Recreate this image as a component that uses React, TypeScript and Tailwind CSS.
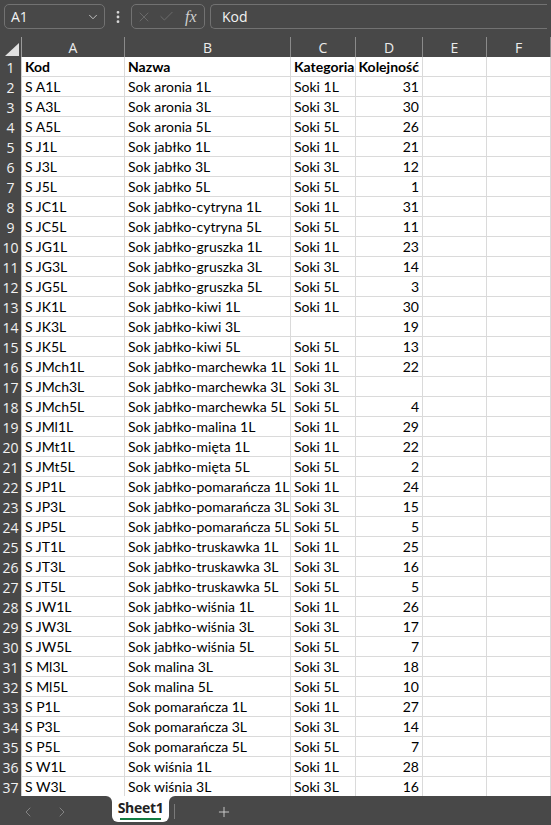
import React from "react";
import { ChevronDown, ChevronLeft, ChevronRight, EllipsisVertical, Plus, X, Check } from "lucide-react";

type Row = [string, string, string, string];

const rows: Row[] = [
  ["S A1L", "Sok aronia 1L", "Soki 1L", "31"],
  ["S A3L", "Sok aronia 3L", "Soki 3L", "30"],
  ["S A5L", "Sok aronia 5L", "Soki 5L", "26"],
  ["S J1L", "Sok jabłko 1L", "Soki 1L", "21"],
  ["S J3L", "Sok jabłko 3L", "Soki 3L", "12"],
  ["S J5L", "Sok jabłko 5L", "Soki 5L", "1"],
  ["S JC1L", "Sok jabłko-cytryna 1L", "Soki 1L", "31"],
  ["S JC5L", "Sok jabłko-cytryna 5L", "Soki 5L", "11"],
  ["S JG1L", "Sok jabłko-gruszka 1L", "Soki 1L", "23"],
  ["S JG3L", "Sok jabłko-gruszka 3L", "Soki 3L", "14"],
  ["S JG5L", "Sok jabłko-gruszka 5L", "Soki 5L", "3"],
  ["S JK1L", "Sok jabłko-kiwi 1L", "Soki 1L", "30"],
  ["S JK3L", "Sok jabłko-kiwi 3L", "", "19"],
  ["S JK5L", "Sok jabłko-kiwi 5L", "Soki 5L", "13"],
  ["S JMch1L", "Sok jabłko-marchewka 1L", "Soki 1L", "22"],
  ["S JMch3L", "Sok jabłko-marchewka 3L", "Soki 3L", ""],
  ["S JMch5L", "Sok jabłko-marchewka 5L", "Soki 5L", "4"],
  ["S JMl1L", "Sok jabłko-malina 1L", "Soki 1L", "29"],
  ["S JMt1L", "Sok jabłko-mięta 1L", "Soki 1L", "22"],
  ["S JMt5L", "Sok jabłko-mięta 5L", "Soki 5L", "2"],
  ["S JP1L", "Sok jabłko-pomarańcza 1L", "Soki 1L", "24"],
  ["S JP3L", "Sok jabłko-pomarańcza 3L", "Soki 3L", "15"],
  ["S JP5L", "Sok jabłko-pomarańcza 5L", "Soki 5L", "5"],
  ["S JT1L", "Sok jabłko-truskawka 1L", "Soki 1L", "25"],
  ["S JT3L", "Sok jabłko-truskawka 3L", "Soki 3L", "16"],
  ["S JT5L", "Sok jabłko-truskawka 5L", "Soki 5L", "5"],
  ["S JW1L", "Sok jabłko-wiśnia 1L", "Soki 1L", "26"],
  ["S JW3L", "Sok jabłko-wiśnia 3L", "Soki 3L", "17"],
  ["S JW5L", "Sok jabłko-wiśnia 5L", "Soki 5L", "7"],
  ["S Ml3L", "Sok malina 3L", "Soki 3L", "18"],
  ["S Ml5L", "Sok malina 5L", "Soki 5L", "10"],
  ["S P1L", "Sok pomarańcza 1L", "Soki 1L", "27"],
  ["S P3L", "Sok pomarańcza 3L", "Soki 3L", "14"],
  ["S P5L", "Sok pomarańcza 5L", "Soki 5L", "7"],
  ["S W1L", "Sok wiśnia 1L", "Soki 1L", "28"],
  ["S W3L", "Sok wiśnia 3L", "Soki 3L", "16"],
];

const cols = "grid grid-cols-[22px_103px_166px_65px_67px_64px_1fr]";
const cell = "h-[20px] border-r border-b border-[#dadada] px-[3px] flex items-center overflow-hidden whitespace-nowrap";

function DataRow({ n, r, bold }: { n: number; r: Row; bold?: boolean }) {
  const w = bold ? "font-bold" : "";
  return (
    <div className={cols}>
      <div className="h-[20px] bg-[#484848] text-[#f2f2f2] text-[14px] flex items-center justify-center border-r border-[#d0d0d0] font-['Open_Sans',sans-serif]">
        {n}
      </div>
      <div className={`${cell} ${w}`}>{r[0]}</div>
      <div className={`${cell} ${w}`}>{r[1]}</div>
      <div className={`${cell} ${w}`}>{r[2]}</div>
      <div className={`${cell} ${w} justify-end`}>{r[3]}</div>
      <div className={cell}></div>
      <div className={cell}></div>
    </div>
  );
}

export default function App() {
  return (
    <div className="w-[551px] h-[825px] bg-[#484848] flex flex-col overflow-hidden font-['Open_Sans',sans-serif]">
      {/* toolbar */}
      <div className="h-[37px] flex items-start pt-[4px] px-[4px] gap-[5px]">
        <div className="w-[101px] h-[25px] rounded-[5px] border border-[#727272] flex items-center justify-between pl-[6px] pr-[4px] text-[#f2f2f2] text-[14px]">
          <span>A1</span>
          <ChevronDown size={14} strokeWidth={1.5} className="text-[#d0d0d0]" />
        </div>
        <div className="w-[16px] h-[25px] flex items-center justify-center">
          <EllipsisVertical size={16} strokeWidth={2.2} className="text-[#d8d8d8]" />
        </div>
        <div className="w-[74px] h-[25px] rounded-[5px] border border-[#727272] flex items-center pl-[4px] gap-[6px]">
          <X size={16} strokeWidth={1} className="text-[#7a7a7a]" />
          <Check size={17} strokeWidth={1} className="text-[#7a7a7a]" />
          <span className="ml-[4px] text-[#cfcfcf] text-[16px] italic font-['Liberation_Serif',serif]">fx</span>
        </div>
        <div className="flex-1 h-[25px] rounded-l-[5px] border border-r-0 border-[#727272] flex items-center pl-[11px] text-[#f2f2f2] text-[14px]">
          Kod
        </div>
      </div>
      {/* column headers */}
      <div className={`${cols} h-[20px] text-[#ececec] text-[14px]`}>
        <div className="flex items-end justify-end pr-[2px] pb-[2px] border-r border-[#9a9a9a]">
          <svg width="14" height="13" viewBox="0 0 14 13">
            <polygon points="14,0 14,13 0,13" fill="#e0e0e0" />
          </svg>
        </div>
        {["A", "B", "C", "D", "E", "F"].map((c) => (
          <div key={c} className="flex items-center justify-center border-r border-[#8a8a8a]">
            {c}
          </div>
        ))}
      </div>
      {/* grid */}
      <div className="flex-1 overflow-hidden bg-white text-[14px] text-black font-['Lato',sans-serif]">
        <DataRow n={1} r={["Kod", "Nazwa", "Kategoria", "Kolejność"]} bold />
        {rows.map((r, i) => (
          <DataRow key={i} n={i + 2} r={r} />
        ))}
      </div>
      {/* tab bar */}
      <div className="h-[29px] flex bg-white">
        <div className="w-[112px] bg-[#484848] rounded-tr-[6px] flex items-center gap-[18px] pl-[20px] pt-[2px]">
          <ChevronLeft size={16} strokeWidth={1.3} className="text-[#8c8c8c]" />
          <ChevronRight size={16} strokeWidth={1.3} className="text-[#8c8c8c]" />
        </div>
        <div className="w-[57px] bg-[#484848]">
          <div className="h-[26px] bg-white rounded-b-[6px] flex flex-col items-center justify-center">
            <span className="text-[14px] font-bold text-[#222] leading-[18px] font-['Open_Sans',sans-serif] tracking-[-0.3px]">Sheet1</span>
            <div className="w-[41px] h-[2px] bg-[#107c41] mt-[1px]"></div>
          </div>
        </div>
        <div className="flex-1 bg-[#484848] rounded-tl-[6px] flex items-center pt-[2px]">
          <div className="ml-[5px] w-px h-[15px] bg-[#7a7a7a]"></div>
          <Plus size={16} strokeWidth={1.3} className="ml-[41px] text-[#d8d8d8]" />
        </div>
      </div>
    </div>
  );
}
